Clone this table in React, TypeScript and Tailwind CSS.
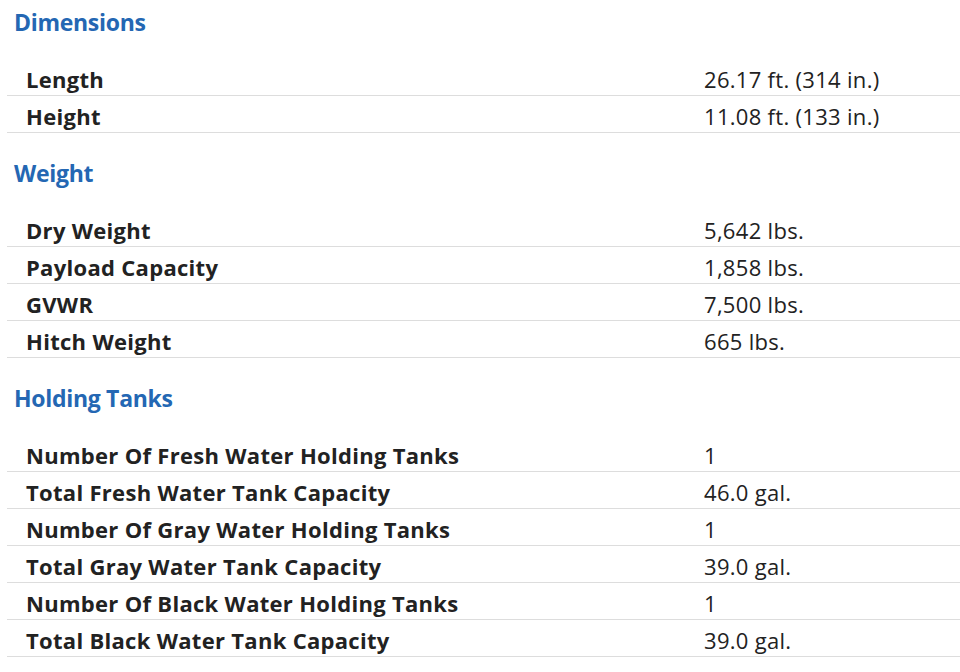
import React from 'react';

const sections = [
  {
    title: 'Dimensions',
    rows: [
      ['Length', '26.17 ft. (314 in.)'],
      ['Height', '11.08 ft. (133 in.)'],
    ],
  },
  {
    title: 'Weight',
    rows: [
      ['Dry Weight', '5,642 lbs.'],
      ['Payload Capacity', '1,858 lbs.'],
      ['GVWR', '7,500 lbs.'],
      ['Hitch Weight', '665 lbs.'],
    ],
  },
  {
    title: 'Holding Tanks',
    rows: [
      ['Number Of Fresh Water Holding Tanks', '1'],
      ['Total Fresh Water Tank Capacity', '46.0 gal.'],
      ['Number Of Gray Water Holding Tanks', '1'],
      ['Total Gray Water Tank Capacity', '39.0 gal.'],
      ['Number Of Black Water Holding Tanks', '1'],
      ['Total Black Water Tank Capacity', '39.0 gal.'],
    ],
  },
];

export default function App() {
  return (
    <div
      className="min-h-screen bg-white pt-[7px] text-[#222]"
      style={{ fontFamily: '"Open Sans", "Noto Sans", sans-serif' }}
    >
      {sections.map((s) => (
        <section key={s.title} className="mb-[25px]">
          <h2 className="h-[30px] pl-[14px] text-[23px] leading-[30px] font-bold tracking-[-0.3px] text-[#2467b3]">
            {s.title}
          </h2>
          <div className="mt-[22px] ml-[7px]">
            {s.rows.map(([label, value]) => (
              <div key={label} className="flex h-[37px] items-center border-b border-[#dddddd] pt-[4px]">
                <div className="w-[697px] shrink-0 pl-[19px] text-[22px] font-bold tracking-[0.3px]">{label}</div>
                <div className="text-[22px] tracking-[0.3px]">{value}</div>
              </div>
            ))}
          </div>
        </section>
      ))}
    </div>
  );
}
